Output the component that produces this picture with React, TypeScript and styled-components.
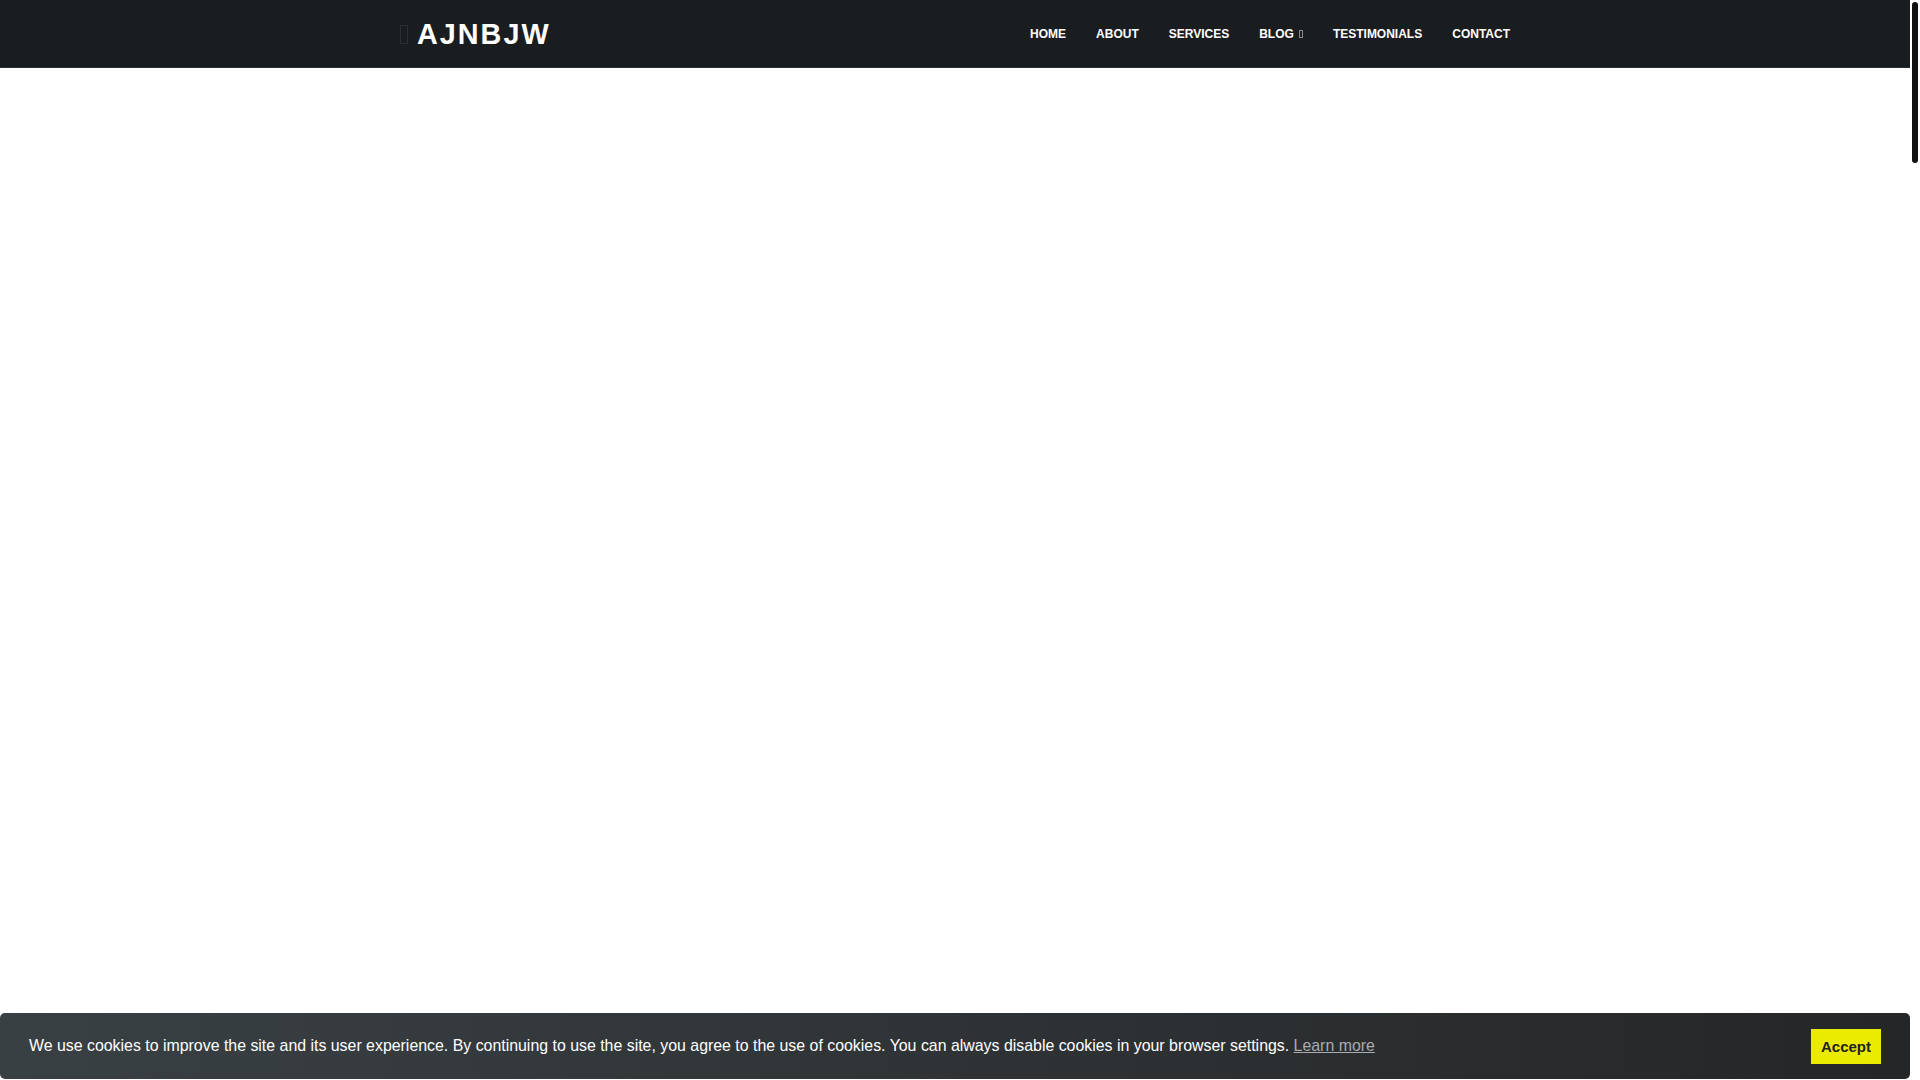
import styled, { createGlobalStyle } from "styled-components";

const GlobalStyle = createGlobalStyle`
  html, body {
    margin: 0;
    padding: 0;
    height: 100%;
    overflow: hidden;
    background: #fff;
    font-family: "Liberation Sans", Arial, sans-serif;
  }

  #root {
    height: 100%;
  }
`;

const navItems = ["Home", "About", "Services", "Blog", "Testimonials", "Contact"];

const App = () => {
  return (
    <>
      <GlobalStyle />
      <Viewport>
        <Page>
          <Header>
            <Container>
              <Brand href="#">
                <MissingGlyph />
                AJNBJW
              </Brand>
              <NavList>
                {navItems.map((item) => (
                  <NavItem key={item}>
                    <NavLink href="#">
                      {item}
                      {item === "Blog" && <CaretGlyph />}
                    </NavLink>
                  </NavItem>
                ))}
              </NavList>
            </Container>
          </Header>

          <Main />

          <CookieBar>
            <CookieText>
              We use cookies to improve the site and its user experience. By
              continuing to use the site, you agree to the use of cookies. You
              can always disable cookies in your browser settings.{" "}
              <LearnMore href="#">Learn more</LearnMore>
            </CookieText>
            <AcceptButton type="button">Accept</AcceptButton>
          </CookieBar>
        </Page>

        <ScrollTrack>
          <ScrollThumb />
        </ScrollTrack>
      </Viewport>
    </>
  );
};

const Viewport = styled.div`
  display: flex;
  height: 100%;
`;

const Page = styled.div`
  flex: 1;
  display: flex;
  flex-direction: column;
  min-width: 0;
`;

const ScrollTrack = styled.div`
  width: 10px;
  flex-shrink: 0;
  background: #fff;
  padding: 2px 2px 0;
  box-sizing: border-box;
`;

const ScrollThumb = styled.div`
  height: 161px;
  background: #111;
  border-radius: 3px;
`;

const Header = styled.header`
  height: 68px;
  flex-shrink: 0;
  background: #1a1d20;
  border-bottom: 1px solid #2a2d30;
  box-sizing: border-box;
`;

const Container = styled.div`
  max-width: 1140px;
  height: 100%;
  margin: 0 auto;
  padding: 0 15px;
  box-sizing: border-box;
  display: flex;
  align-items: center;
  justify-content: space-between;
`;

const Brand = styled.a`
  display: flex;
  align-items: center;
  color: #fff;
  text-decoration: none;
  font-size: 28.8px;
  font-weight: 700;
  letter-spacing: 2px;
  padding-top: 1px;
`;

const MissingGlyph = styled.span`
  display: inline-block;
  width: 8px;
  height: 19px;
  border: 1px solid #2c2f33;
  box-sizing: border-box;
  margin-right: 9px;
`;

const NavList = styled.ul`
  display: flex;
  gap: 30px;
  list-style: none;
  margin: 0;
  padding: 0;
`;

const NavItem = styled.li`
  display: flex;
`;

const NavLink = styled.a`
  display: flex;
  align-items: center;
  color: #fff;
  text-decoration: none;
  text-transform: uppercase;
  font-size: 12px;
  font-weight: 700;
  line-height: 1;
`;

const CaretGlyph = styled.span`
  display: inline-block;
  width: 4px;
  height: 8px;
  margin-left: 5px;
  border: 1px solid #8a8c8e;
  box-sizing: border-box;
`;

const Main = styled.main`
  flex: 1;
  background: #fff;
`;

const CookieBar = styled.div`
  position: fixed;
  left: 0;
  right: 10px;
  bottom: 1px;
  height: 66px;
  box-sizing: border-box;
  padding: 0 29px;
  display: flex;
  align-items: center;
  justify-content: space-between;
  border-radius: 5px;
  background: linear-gradient(to right, #394044, #252627);
  z-index: 10;
`;

const CookieText = styled.p`
  margin: 0;
  color: #fff;
  font-size: 15.9px;
  line-height: 1.4;
`;

const LearnMore = styled.a`
  color: #a9abad;
  text-decoration: underline;
`;

const AcceptButton = styled.button`
  background: #ebeb00;
  color: #222;
  border: none;
  border-radius: 0;
  font-family: "Liberation Sans", Arial, sans-serif;
  font-size: 15px;
  font-weight: 700;
  height: 35px;
  padding: 0 10px;
  cursor: pointer;
`;

export default App;
